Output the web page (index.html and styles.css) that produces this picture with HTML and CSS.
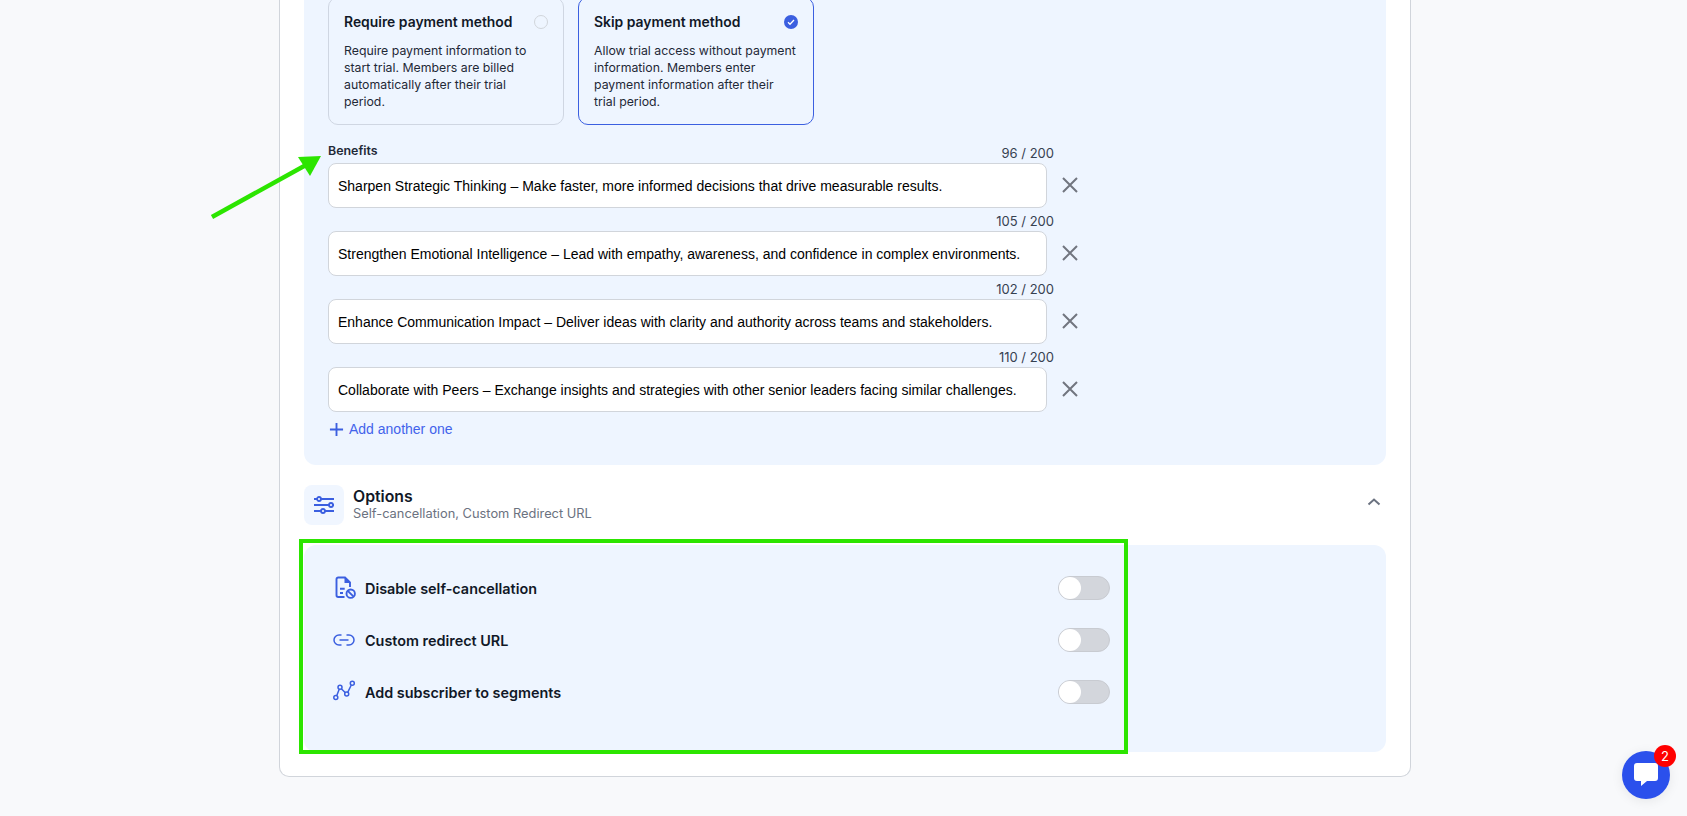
FILE: index.html
```html
<!DOCTYPE html>
<html lang="en">
<head>
<meta charset="utf-8">
<title>Plan settings</title>
<link rel="stylesheet" href="styles.css">
</head>
<body>
<main class="card">
  <section class="panel panel-top">
    <div class="methods">
      <div class="method">
        <div class="method-head"><span class="method-title">Require payment method</span><span class="radio"></span></div>
        <p class="method-text">Require payment information to<br>start trial. Members are billed<br>automatically after their trial<br>period.</p>
      </div>
      <div class="method method-on">
        <div class="method-head"><span class="method-title">Skip payment method</span>
          <svg class="radio-on" viewBox="0 0 14 14"><circle cx="7" cy="7" r="7" fill="#3b5fe0"/><path d="M4 7.200l2 2 4-4.200" fill="none" stroke="#fff" stroke-width="1.300"/></svg>
        </div>
        <p class="method-text">Allow trial access without payment<br>information. Members enter<br>payment information after their<br>trial period.</p>
      </div>
    </div>
    <div class="benefits">
      <div class="count-line"><span class="label">Benefits</span><span class="count">96 / 200</span></div>
      <div class="field-row"><div class="field">Sharpen Strategic Thinking – Make faster, more informed decisions that drive measurable results.</div>
        <svg class="close" viewBox="0 0 16 16"><path d="M1 1l14 14M15 1L1 15"/></svg></div>
      <div class="count-line count-next"><span class="count">105 / 200</span></div>
      <div class="field-row"><div class="field">Strengthen Emotional Intelligence – Lead with empathy, awareness, and confidence in complex environments.</div>
        <svg class="close" viewBox="0 0 16 16"><path d="M1 1l14 14M15 1L1 15"/></svg></div>
      <div class="count-line count-next"><span class="count">102 / 200</span></div>
      <div class="field-row"><div class="field">Enhance Communication Impact – Deliver ideas with clarity and authority across teams and stakeholders.</div>
        <svg class="close" viewBox="0 0 16 16"><path d="M1 1l14 14M15 1L1 15"/></svg></div>
      <div class="count-line count-next"><span class="count">110 / 200</span></div>
      <div class="field-row"><div class="field">Collaborate with Peers – Exchange insights and strategies with other senior leaders facing similar challenges.</div>
        <svg class="close" viewBox="0 0 16 16"><path d="M1 1l14 14M15 1L1 15"/></svg></div>
      <div class="add"><svg class="plus" viewBox="0 0 16 16"><path d="M8 1v14M1 8h14"/></svg><span>Add another one</span></div>
    </div>
  </section>

  <header class="section-head">
    <span class="section-icon">
      <svg viewBox="0 0 24 24" width="24" height="24" fill="#f0f6ff" stroke="#3b5fe0" stroke-width="1.800">
        <path d="M2 6h20M2 12h20M2 18h20"/>
        <circle cx="7" cy="6" r="2"/><circle cx="19" cy="12" r="2"/><circle cx="11" cy="18" r="2"/>
      </svg>
    </span>
    <div class="section-text">
      <div class="section-title">Options</div>
      <div class="section-sub">Self-cancellation, Custom Redirect URL</div>
    </div>
    <svg class="chevron" viewBox="0 0 14 8"><path d="M1.500 6.500L7 1.500l5.500 5"/></svg>
  </header>

  <section class="panel panel-options">
    <div class="option">
      <svg class="opt-icon opt-heavy" viewBox="0 0 24 24">
        <path d="M12.500 21H6.200a1.700 1.700 0 0 1-1.700-1.700V3.200A1.700 1.700 0 0 1 6.200 1.500h6.800l5 5v4.500"/>
        <path class="solid" d="M12.500 1.500v5.500h5.500z"/>
        <path d="M8 12.700h4.700M8 17h3"/>
        <circle cx="18.700" cy="17.700" r="4.200"/><path d="M15.800 14.800l5.800 5.800"/>
      </svg>
      <span class="opt-label">Disable self-cancellation</span>
      <span class="toggle"><span class="knob"></span></span>
    </div>
    <div class="option">
      <svg class="opt-icon" viewBox="0 0 24 24">
        <path d="M9.500 17H7a5 5 0 0 1 0-10h2.500M14.500 7H17a5 5 0 0 1 0 10h-2.500M7.500 12h9"/>
      </svg>
      <span class="opt-label">Custom redirect URL</span>
      <span class="toggle"><span class="knob"></span></span>
    </div>
    <div class="option">
      <svg class="opt-icon" viewBox="0 0 24 24">
        <path d="M4.800 15.600L7.300 9.100M9.300 8.700L13.400 12.700M15.700 12.400L19.300 5"/>
        <circle cx="3.800" cy="17.500" r="2"/><circle cx="8" cy="7.300" r="2"/><circle cx="14.700" cy="14" r="2"/><circle cx="20.300" cy="3.300" r="2"/>
      </svg>
      <span class="opt-label">Add subscriber to segments</span>
      <span class="toggle"><span class="knob"></span></span>
    </div>
  </section>
</main>

<div class="mark-box"></div>
<svg class="mark-arrow" viewBox="0 0 130 80" width="130" height="80">
  <path d="M12 71L106 19" stroke="#2ce500" stroke-width="4.500" fill="none"/>
  <path d="M121 10L98 11L110 30z" fill="#2ce500"/>
</svg>

<div class="chat">
  <svg viewBox="0 0 24 24" width="24" height="24"><path d="M3 0h18a3 3 0 0 1 3 3v12a3 3 0 0 1-3 3H13l-6 5v-5H3a3 3 0 0 1-3-3V3a3 3 0 0 1 3-3z" fill="#fff"/></svg>
  <span class="badge">2</span>
</div>
</body>
</html>
```

FILE: styles.css
```css
* { box-sizing: border-box; }
html { overflow: hidden; }
body {
  margin: 0;
  height: 816px;
  overflow: hidden;
  background: #f8f9fb;
  font-family: Inter, "Noto Sans", sans-serif;
  color: #111827;
  position: relative;
}
.card {
  width: 1132px;
  height: 777px;
  margin-left: 279px;
  background: #fff;
  border: 1px solid #d1d5db;
  border-top: 0;
  border-radius: 0 0 10px 10px;
  padding: 0 24px 24px;
  display: flex;
  flex-direction: column;
}
.panel { background: #eef5ff; border-radius: 0 0 12px 12px; }
.panel-top { height: 465px; padding: 0 24px; }
.methods { display: flex; gap: 14px; margin-top: -3px; }
.method {
  width: 236px;
  height: 128px;
  padding: 14px 15px 0;
  background: #eef5ff;
  border: 1px solid #cfd6e2;
  border-radius: 10px;
}
.method-on { border-color: #3b5fe0; }
.method-head { display: flex; justify-content: space-between; align-items: center; height: 20px; }
.method-title { font-size: 13.9px; font-weight: 600; color: #111827; }
.radio { width: 14px; height: 14px; border-radius: 50%; border: 1px solid #d1d5db; }
.radio-on { width: 14px; height: 14px; }
.method-text {
  margin: 10px 0 0;
  font-size: 12.3px;
  line-height: 17px;
  color: #1f2937;
  white-space: nowrap;
}
.benefits { margin-top: 18px; width: 770px; }
.count-line { display: flex; justify-content: space-between; align-items: center; height: 20px; width: 726px; }
.count-next { margin-top: 3px; justify-content: flex-end; }
.label { font-size: 12.4px; font-weight: 600; color: #1f2937; margin-top: -6px; }
.count { font-size: 13px; color: #374151; }
.field-row { display: flex; align-items: center; }
.field {
  flex: none;
  width: 719px;
  height: 45px;
  padding: 0 9px;
  display: flex;
  align-items: center;
  background: #fff;
  border: 1px solid #d1d5db;
  border-radius: 8px;
  font-family: "Liberation Sans", Arial, sans-serif;
  font-size: 14px;
  color: #000;
  white-space: nowrap;
}
.close { width: 16px; height: 16px; margin: 0 0 2px 15px; fill: none; stroke: #71757f; stroke-width: 2; }
.add {
  display: flex;
  align-items: center;
  height: 24px;
  margin-top: 5px;
  font-family: "Liberation Sans", Arial, sans-serif;
  font-size: 14px;
  color: #4263eb;
}
.plus { width: 15px; height: 15px; margin: 0 5px 0 1px; fill: none; stroke: #3b5fe0; stroke-width: 2; }

.section-head { display: flex; align-items: center; height: 80px; }
.section-icon {
  width: 40px;
  height: 40px;
  border-radius: 8px;
  background: #f0f6ff;
  display: flex;
  align-items: center;
  justify-content: center;
}
.section-text { margin-left: 9px; flex: 1; }
.section-title { font-size: 15.8px; font-weight: 600; line-height: 18px; color: #111827; }
.section-sub { font-size: 12.85px; line-height: 16px; color: #6b7280; }
.chevron { width: 14px; height: 8px; margin: -6px 5px 0 0; fill: none; stroke: #6b7280; stroke-width: 2; }

.panel-options { flex: 1; border-radius: 12px; padding: 29px 0 0 28px; }
.option { display: flex; align-items: center; height: 28px; width: 778px; margin-bottom: 24px; }
.opt-icon { width: 24px; height: 24px; fill: none; stroke: #3b5fe0; stroke-width: 1.500; flex: none; }
.opt-heavy { stroke-width: 1.900; }
.opt-icon .solid { fill: #3b5fe0; stroke: none; }
.opt-label { margin-left: 9px; flex: 1; font-size: 14.4px; font-weight: 600; color: #111827; }
.toggle {
  width: 52px;
  height: 24px;
  background: #d3d6dc;
  border: 1px solid #c8cbd1;
  border-radius: 12px;
  display: block;
}
.knob { display: block; width: 22px; height: 22px; border-radius: 50%; background: #fff; }

.mark-box {
  position: absolute;
  left: 299px;
  top: 539px;
  width: 829px;
  height: 215px;
  border: 4px solid #2ce500;
  pointer-events: none;
}
.mark-arrow { position: absolute; left: 200px; top: 146px; }
.chat {
  position: absolute;
  left: 1622px;
  top: 751px;
  width: 48px;
  height: 48px;
  border-radius: 50%;
  background: #2b50ec;
  display: flex;
  align-items: center;
  justify-content: center;
  box-shadow: 0 2px 12px rgba(0, 0, 0, .08);
}
.badge {
  position: absolute;
  left: 32px;
  top: -6px;
  width: 22px;
  height: 22px;
  border-radius: 50%;
  background: #f00;
  color: #fff;
  font-size: 13px;
  text-align: center;
  line-height: 22px;
}
```
